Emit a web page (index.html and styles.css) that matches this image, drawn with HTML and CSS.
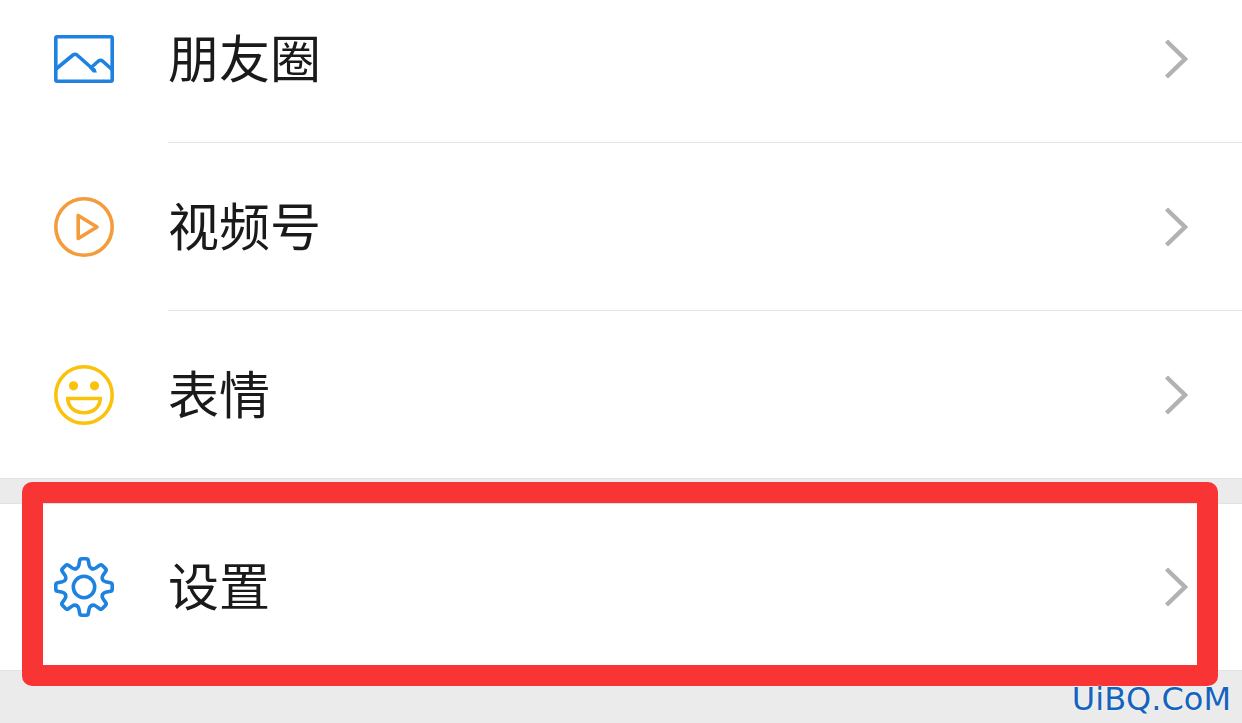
FILE: index.html
```html
<!DOCTYPE html>
<html lang="zh-CN">
<head>
<meta charset="utf-8">
<meta name="viewport" content="width=device-width, initial-scale=1">
<title>设置</title>
<link rel="stylesheet" href="styles.css">
</head>
<body>
<svg class="defs" aria-hidden="true">
  <symbol id="chevron" viewBox="0 0 24 40"><path d="M2.500 2 21 20 2.500 38" fill="none" stroke="#b2b2b2" stroke-width="4.400"/></symbol>
  <path id="tooth" d="M-7.650-18.500Q-5.600-19.300-5.200-21.500L-4.300-26.400Q-4-28.200-2.200-28.200H2.200Q4-28.200 4.300-26.400L5.200-21.500Q5.600-19.300 7.650-18.500"/>
</svg>
<main class="page">
  <nav class="group group-first">
    <a class="row" href="#moments">
      <svg class="icon" viewBox="0 0 60 60" fill="none" stroke="#1e82e1" stroke-width="3.600" stroke-linejoin="round"><rect x="1.800" y="7.800" width="56.400" height="44.400" rx="1.500"/><path d="M2 40 19 26Q21 24.500 23 26L40.500 41.500M36 39.500 44.500 32Q46.500 30.500 48.500 32L58 40.500"/><path d="M35 39 39 43.600H43L41 39Z" fill="#1e82e1" stroke="none"/></svg>
      <span class="label">朋友圈</span>
      <svg class="chevron"><use href="#chevron"/></svg>
    </a>
    <a class="row" href="#channels">
      <svg class="icon" viewBox="0 0 60 60" fill="none" stroke="#f49c3c" stroke-width="3.600"><circle cx="30" cy="30" r="28.200"/><path d="M24.200 18.500V41.500L43 30Z" stroke-linejoin="round"/></svg>
      <span class="label">视频号</span>
      <svg class="chevron"><use href="#chevron"/></svg>
    </a>
    <a class="row" href="#stickers">
      <svg class="icon" viewBox="0 0 60 60" fill="none" stroke="#fbc20c" stroke-width="3.600"><circle cx="30" cy="30" r="28.200"/><g fill="#fbc20c" stroke="none"><circle cx="19.500" cy="20.800" r="4.600"/><circle cx="40.500" cy="20.800" r="4.600"/></g><path d="M13.800 33.500H46.200C46.200 42 39 47.700 30 47.700S13.800 42 13.800 33.500Z"/></svg>
      <span class="label">表情</span>
      <svg class="chevron"><use href="#chevron"/></svg>
    </a>
  </nav>
  <nav class="group group-marked">
    <a class="row" href="#settings">
      <svg class="icon" viewBox="-30 -30 60 60" fill="none" stroke="#1e82e1" stroke-width="3.600" stroke-linejoin="round" stroke-linecap="round"><circle r="10.700"/><use href="#tooth"/><use href="#tooth" transform="rotate(45)"/><use href="#tooth" transform="rotate(90)"/><use href="#tooth" transform="rotate(135)"/><use href="#tooth" transform="rotate(180)"/><use href="#tooth" transform="rotate(225)"/><use href="#tooth" transform="rotate(270)"/><use href="#tooth" transform="rotate(315)"/></svg>
      <span class="label">设置</span>
      <svg class="chevron"><use href="#chevron"/></svg>
    </a>
  </nav>
  <footer class="watermark">UiBQ.CoM</footer>
</main>
</body>
</html>
```
FILE: styles.css
```css
* {
  box-sizing: border-box;
}

body {
  margin: 0;
  background: #ebebeb;
  font-family: "Noto Sans CJK SC", sans-serif;
}

.defs {
  position: absolute;
  width: 0;
  height: 0;
}

.page {
  display: flex;
  flex-direction: column;
  gap: 24px;
  min-height: 100vh;
  overflow: hidden;
}

.group {
  background: #fff;
  box-shadow: inset 0 1px #e2e2e2, inset 0 -1px #e2e2e2;
}

/* The list is scrolled: the first row is partly above the top edge. */
.group-first {
  margin-top: -25px;
}

.row {
  display: flex;
  align-items: center;
  height: 168px;
  padding: 0 54px;
  color: #1a1a1a;
  text-decoration: none;
  background: linear-gradient(#e5e5e5, #e5e5e5) 168px 100% / 100% 1px no-repeat;
}

.row:last-child {
  background: none;
}

.icon {
  flex: none;
  width: 60px;
  height: 60px;
  margin-right: 54px;
}

.label {
  flex: 1;
  padding-bottom: 6px;
  font-size: 51px;
  line-height: 72px;
}

.chevron {
  flex: none;
  width: 24px;
  height: 40px;
}

.group-marked {
  position: relative;
}

.group-marked::after {
  content: "";
  position: absolute;
  inset: -21px 24px -15px 22px;
  border: 21px solid #f83434;
  border-radius: 10px;
  pointer-events: none;
}

.watermark {
  position: relative;
  margin-top: -12px;
  padding-right: 11px;
  color: #1464be;
  font-family: "DejaVu Sans", sans-serif;
  font-size: 32px;
  line-height: 32px;
  text-align: right;
  text-shadow: 0 0 2px #fff;
}
```
